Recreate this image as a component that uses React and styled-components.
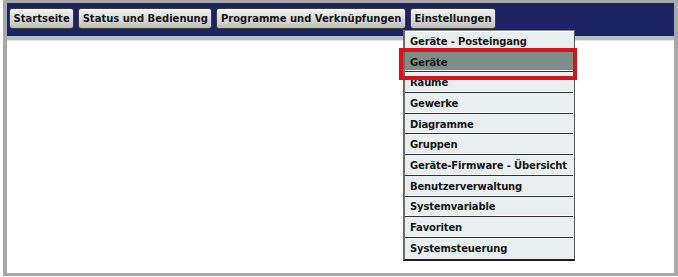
import React from 'react'
import styled, { createGlobalStyle } from 'styled-components'

const GlobalStyle = createGlobalStyle`
  html, body { margin: 0; padding: 0; background: #fff; }
  body { font-family: "DejaVu Sans", Verdana, sans-serif; }
`

const menu = ['Startseite', 'Status und Bedienung', 'Programme und Verknüpfungen', 'Einstellungen']

const settings = [
  'Geräte - Posteingang',
  'Geräte',
  'Räume',
  'Gewerke',
  'Diagramme',
  'Gruppen',
  'Geräte-Firmware - Übersicht',
  'Benutzerverwaltung',
  'Systemvariable',
  'Favoriten',
  'Systemsteuerung',
]

export default function App() {
  return (
    <>
      <GlobalStyle />
      <Frame>
        <Screen>
          <Header>
            {menu.map((m) => (
              <MenuButton key={m}>{m}</MenuButton>
            ))}
          </Header>
          <Strip />
          <Content />
          <Dropdown>
            {settings.map((s, i) => (
              <Item key={s} $active={i === 1}>{s}</Item>
            ))}
            <Highlight />
          </Dropdown>
        </Screen>
      </Frame>
    </>
  )
}

const Frame = styled.div`
  box-sizing: border-box;
  margin-left: 3px;
  width: 675px;
  height: 276px;
  border-style: solid;
  border-color: #a7a8a7;
  border-width: 3px 4px 3px 4px;
`

const Screen = styled.div`
  position: relative;
  display: flex;
  flex-direction: column;
  height: 100%;
  background: #fff;
`

const Header = styled.nav`
  display: flex;
  align-items: center;
  gap: 4px;
  height: 33px;
  padding-left: 2px;
  background: #1b2362;
`

const MenuButton = styled.button`
  box-sizing: border-box;
  height: 21px;
  margin-bottom: 2px;
  padding: 0 3.5px;
  border: 1px solid #3c3c3c;
  border-radius: 3px;
  background: linear-gradient(#f2f2f2, #d6d6d6 60%, #bdbdbd);
  box-shadow: inset 0 1px 0 #fff;
  font-family: "DejaVu Sans", Verdana, sans-serif;
  font-weight: bold;
  font-size: 10px;
  color: #141414;
  white-space: nowrap;
`

const Strip = styled.div`
  height: 4px;
  background: #b7c1c4;
  border-bottom: 1px solid #e2e8ea;
`

const Content = styled.div`
  flex: 1;
`

const Dropdown = styled.ul`
  position: absolute;
  left: 396px;
  top: 27px;
  box-sizing: border-box;
  width: 172px;
  margin: 0;
  padding: 0;
  list-style: none;
  background: #e9eef0;
  border-top: 1px solid #8a8a8a;
  border-left: 2px solid #6a6a6a;
  border-right: 1px solid #5a5a5a;
  border-bottom: 2px solid #1e1e1e;
  box-shadow: inset 0 1px 0 #fff;
`

const Item = styled.li`
  box-sizing: border-box;
  display: flex;
  align-items: center;
  height: 20.7px;
  margin-right: 1px;
  padding: 1px 0 0 5px;
  background: ${(p) => (p.$active ? '#7f8d8a' : 'transparent')};
  border-bottom: 1px solid #333;
  box-shadow: inset 0 -1px 0 #fafafa;
  font-size: 10px;
  font-weight: bold;
  letter-spacing: -0.15px;
  color: #151515;
  white-space: nowrap;
  &:last-of-type {
    border-bottom: none;
    box-shadow: none;
  }
`

const Highlight = styled.div`
  position: absolute;
  left: -6px;
  top: 17px;
  width: 178px;
  height: 32px;
  box-sizing: border-box;
  border: 4px solid #d7141c;
  pointer-events: none;
`
